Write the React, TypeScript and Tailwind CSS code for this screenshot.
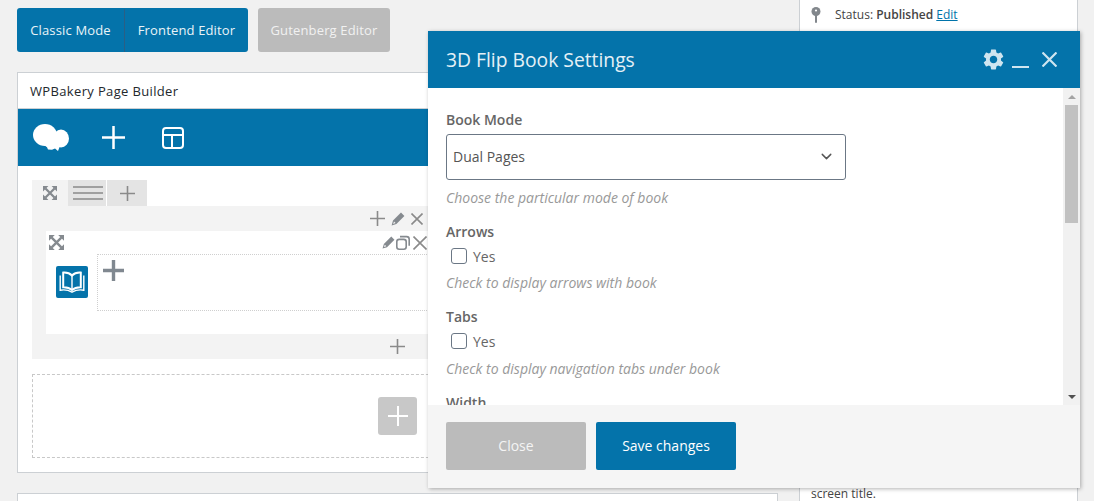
import { ChevronDown } from "lucide-react";
import { MdSettings } from "react-icons/md";

// four diagonal arrows used on the row and column handles
function ExpandIcon({ size = 14 }: { size?: number }) {
  return (
    <svg width={size} height={size} viewBox="0 0 14 14" fill="#858a8f">
      <path d="M0 0h5.400L0 5.400zM14 0v5.400L8.600 0zM0 14V8.600L5.400 14zM14 14H8.600L14 8.600z" />
      <path d="M2.500 2.500l9 9M11.500 2.500l-9 9" stroke="#858a8f" strokeWidth="2.200" />
    </svg>
  );
}

function Plus({ size = 16, weight = 2, color = "#8a8a8a" }: { size?: number; weight?: number; color?: string }) {
  return (
    <svg width={size} height={size} viewBox={`0 0 ${size} ${size}`} fill="none" stroke={color} strokeWidth={weight}>
      <path d={`M${size / 2} 0v${size}M0 ${size / 2}h${size}`} />
    </svg>
  );
}

function Cross({ size = 12, weight = 1.6, color = "#8a8a8a" }: { size?: number; weight?: number; color?: string }) {
  return (
    <svg width={size} height={size} viewBox={`0 0 ${size} ${size}`} fill="none" stroke={color} strokeWidth={weight}>
      <path d={`M.5.5L${size - 0.5} ${size - 0.5}M${size - 0.5} .5L.5 ${size - 0.5}`} />
    </svg>
  );
}

function Pencil({ size = 14 }: { size?: number }) {
  return (
    <svg width={size} height={size} viewBox="0 0 14 14" fill="#858a8f">
      <path d="M10 .6l3.400 3.400-8 8L.6 13.400 2 8.600zM3 9.400l-.9 2.500 2.500-.9z" fillRule="evenodd" />
    </svg>
  );
}

function CloneIcon() {
  return (
    <svg width="14" height="15" viewBox="0 0 14 15" fill="none" stroke="#858a8f" strokeWidth="1.6">
      <rect x="0.8" y="4.4" width="9.4" height="9.8" rx="2.4" />
      <path d="M4 1.600h6.600a2.600 2.600 0 0 1 2.600 2.600v6.600" />
    </svg>
  );
}

function CloudLogo() {
  return (
    <svg width="36" height="27" viewBox="0 0 36 27" fill="#fff">
      <ellipse cx="12" cy="11" rx="12" ry="11" />
      <ellipse cx="28" cy="14.5" rx="8" ry="9" />
      <ellipse cx="19" cy="16" rx="10" ry="7.5" />
      <path d="M11 21l9-1 7 2-2 5-3-2.400-3 1.200-4-.2-1-2.400z" />
    </svg>
  );
}

function LayoutIcon() {
  return (
    <svg width="24" height="24" viewBox="0 0 24 24" fill="none" stroke="#fff" strokeWidth="2">
      <rect x="2" y="2" width="20" height="20" rx="3" />
      <path d="M2 9h20M11 9v13" />
    </svg>
  );
}

function BookIcon() {
  return (
    <svg width="26" height="23" viewBox="0 0 26 23" fill="none" stroke="#fff">
      <path d="M13 4.500C10.500 2 7 1.400 4.200 1.600v14.600c3.200-.1 6.400.6 8.800 2.800 2.400-2.200 5.600-2.900 8.800-2.800V1.600C19 1.400 15.500 2 13 4.500z" strokeWidth="2" />
      <path d="M13 4.500V19" strokeWidth="1.400" />
      <path d="M1.200 4.500v14.700c4-.7 8-.3 11.800 2 3.800-2.300 7.800-2.700 11.800-2V4.500" strokeWidth="1.400" />
    </svg>
  );
}

function PinIcon() {
  return (
    <svg width="10" height="16" viewBox="0 0 10 16" fill="#82878c">
      <circle cx="5" cy="4.500" r="4.500" />
      <rect x="4" y="7" width="2" height="9" rx="1" />
      <circle cx="5" cy="3.500" r="1.100" fill="#fff" />
    </svg>
  );
}

function YesCheck({ className = "" }: { className?: string }) {
  return (
    <label className={`flex h-5 items-center pl-[5px] text-[14px] text-[#666] ${className}`}>
      <span className="h-4 w-4 rounded-[3px] border border-[#6b7785] bg-white" />
      <span className="ml-[6px]">Yes</span>
    </label>
  );
}

function SettingsModal() {
  return (
    <div className="absolute left-[428px] top-[31px] flex h-[457px] w-[652px] flex-col bg-white shadow-[1px_1px_4px_rgba(0,0,0,0.3)]">
      <div className="flex h-[57px] shrink-0 items-center bg-[#0473aa] pl-[18px] pr-[23px]">
        <h2 className="flex-1 text-[19.3px] leading-none text-[#e4f0f6]">3D Flip Book Settings</h2>
        <MdSettings className="h-[25px] w-[25px] text-[#cfe5f0]" />
        <span className="ml-[6px] mt-[14px] h-[2px] w-[17px] bg-[#cfe5f0]" />
        <span className="ml-[13px]">
          <Cross size={15} weight={2.2} color="#cfe5f0" />
        </span>
      </div>

      <div className="flex h-[317px] shrink-0">
        <div className="flex-1 overflow-hidden pl-[18px] pt-[22px]">
          <div className="text-[14px] font-semibold leading-[20px] text-[#666]">Book Mode</div>
          <div className="mt-[4px] flex h-[46px] w-[400px] items-center justify-between rounded-[3px] border border-[#6b7785] pb-[2px] pl-[6px] pr-[10px] text-[14px] text-[#555]">
            <span>Dual Pages</span>
            <ChevronDown size={17} strokeWidth={2} className="text-[#555]" />
          </div>
          <p className="mt-[8px] text-[14px] italic leading-[20px] text-[#999]">Choose the particular mode of book</p>

          <div className="mt-[14px] text-[14px] font-semibold leading-[20px] text-[#666]">Arrows</div>
          <YesCheck className="mt-[4px]" />
          <p className="mt-[7px] text-[14px] italic leading-[20px] text-[#999]">Check to display arrows with book</p>

          <div className="mt-[14px] text-[14px] font-semibold leading-[20px] text-[#666]">Tabs</div>
          <YesCheck className="mt-[4px]" />
          <p className="mt-[8px] text-[14px] italic leading-[20px] text-[#999]">Check to display navigation tabs under book</p>

          <div className="mt-[14px] text-[14px] font-semibold leading-[20px] text-[#666]">Width</div>
        </div>

        <div className="flex w-[17px] shrink-0 flex-col bg-[#f1f1f1]">
          <div className="flex h-[17px] items-center justify-center">
            <span className="h-0 w-0 border-x-4 border-b-4 border-x-transparent border-b-[#a3a3a3]" />
          </div>
          <div className="mx-auto h-[118px] w-[13px] bg-[#c1c1c1]" />
          <div className="flex-1" />
          <div className="flex h-[17px] items-center justify-center">
            <span className="h-0 w-0 border-x-4 border-t-4 border-x-transparent border-t-[#505050]" />
          </div>
        </div>
      </div>

      <div className="flex flex-1 gap-[10px] bg-[#f5f5f5] pl-[18px] pt-[17px]">
        <button className="h-[48px] w-[140px] rounded-[2px] bg-[#bbbbbb] pb-[2px] text-[14px] font-medium text-[#f4f4f4]">Close</button>
        <button className="h-[48px] w-[140px] rounded-[2px] bg-[#0473aa] pb-[2px] text-[14px] font-medium text-white">Save changes</button>
      </div>
    </div>
  );
}

export default function App() {
  return (
    <div className="relative h-[501px] w-[1094px] overflow-hidden bg-[#f1f1f1] font-['Open_Sans',sans-serif]">
      <div className="flex gap-[21px] pl-[17px]">
        <div className="w-[761px] shrink-0 pt-2">
          <div className="flex gap-[10px]">
            <div className="flex h-[44px] overflow-hidden rounded-[3px] bg-[#0473aa] pt-[1px] text-[13px] font-medium tracking-[0.15px] text-[#e9f3f8]">
              <button className="w-[108px] border-r border-[#2a5f85]">Classic Mode</button>
              <button className="w-[123px]">Frontend Editor</button>
            </div>
            <button className="h-[44px] w-[132px] rounded-[3px] bg-[#bbbbbb] pt-[1px] text-[13px] font-medium tracking-[0.15px] text-[#f1f1f1]">Gutenberg Editor</button>
          </div>

          <div className="mt-5 h-[401px] border border-[#ccd0d4] bg-white">
            <div className="flex h-[36px] items-center border-b border-[#ccd0d4] pl-3 pt-[2px] text-[13px] font-medium tracking-[0.35px] text-[#23282d]">WPBakery Page Builder</div>
            <div className="flex h-[57px] items-center bg-[#0473aa] pl-[15px]">
              <CloudLogo />
              <span className="ml-[33px]">
                <Plus size={23} weight={2.5} color="#fff" />
              </span>
              <span className="ml-[36px]">
                <LayoutIcon />
              </span>
            </div>

            <div className="px-[14px] pt-[14px]">
              <div className="flex h-[26px]">
                <div className="flex w-[36px] items-center justify-center bg-[#f3f3f3]">
                  <ExpandIcon />
                </div>
                <div className="flex w-[38px] flex-col justify-center gap-[4px] bg-[#e4e4e4] pl-[5px] pr-[3px]">
                  <span className="h-[2px] bg-[#a0a0a0]" />
                  <span className="h-[2px] bg-[#a0a0a0]" />
                  <span className="h-[2px] bg-[#a0a0a0]" />
                </div>
                <div className="ml-[1px] flex w-[40px] items-center justify-center bg-[#e4e4e4]">
                  <Plus size={15} weight={1.6} />
                </div>
              </div>

              <div className="h-[153px] bg-[#f3f3f3] px-[14px]">
                <div className="flex h-[25px] items-center justify-end gap-[6px] pr-[326px]">
                  <Plus size={15} weight={1.6} />
                  <Pencil size={14} />
                  <Cross size={12} />
                </div>
                <div className="h-[103px] bg-white">
                  <div className="flex h-[23px] items-center justify-between pl-[3px] pr-[322px]">
                    <ExpandIcon size={15} />
                    <div className="flex items-center gap-[1px]">
                      <Pencil size={13} />
                      <CloneIcon />
                      <span className="ml-[2px]">
                        <Cross size={14} />
                      </span>
                    </div>
                  </div>
                  <div className="flex">
                    <div className="mt-[12px] ml-[10px] flex h-[32px] w-[32px] items-center justify-center rounded-[2px] bg-[#0473aa]">
                      <BookIcon />
                    </div>
                    <div className="ml-[9px] h-[57px] flex-1 border border-dotted border-[#cfcfcf] pl-[5px] pt-[5px]">
                      <Plus size={21} weight={3.4} color="#808890" />
                    </div>
                  </div>
                </div>
                <div className="flex h-[25px] items-center justify-center">
                  <Plus size={15} weight={1.6} />
                </div>
              </div>

              <div className="mt-[15px] flex h-[84px] items-center justify-center border border-dashed border-[#c8c8c8]">
                <div className="flex h-[38px] w-[39px] items-center justify-center rounded-[3px] bg-[#c8c8c8]">
                  <Plus size={20} weight={2} color="#fff" />
                </div>
              </div>
            </div>
          </div>

          <div className="mt-5 h-[40px] border border-[#ccd0d4] bg-white" />
        </div>

        <div className="h-[501px] w-[279px] shrink-0 border-x border-[#ccd0d4] bg-white pl-[11px] text-[13px] text-[#444]">
          <div className="flex h-[29px] items-center">
            <PinIcon />
            <span className="ml-[14px] text-[12px]">
              Status: <span className="font-semibold">Published</span> <span className="text-[#0073aa] underline">Edit</span>
            </span>
          </div>
          <p className="mt-[455px] text-[12px] leading-[20px] text-[#444]">screen title.</p>
        </div>
      </div>

      <SettingsModal />
    </div>
  );
}
